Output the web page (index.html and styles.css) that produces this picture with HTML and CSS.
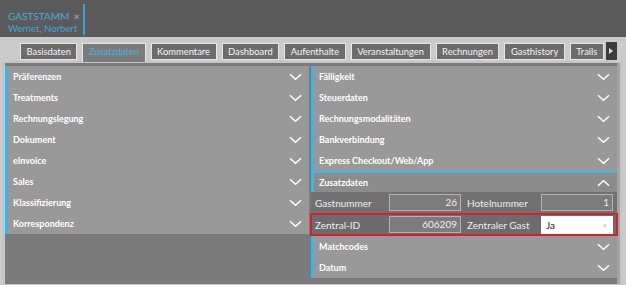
FILE: index.html
```html
<!DOCTYPE html>
<html lang="de">
  <head>
    <meta charset="UTF-8" />
    <title>Gaststamm</title>
    <link rel="stylesheet" href="styles.css">
  </head>
  <body>
    <div class="topbar">
      <div class="doc-tab">
        <div class="doc-title">GASTSTAMM <span class="close">&times;</span></div>
        <div class="doc-sub">Wernet, Norbert</div>
      </div>
    </div>

    <div class="tabs">
      <div class="tab">Basisdaten</div>
      <div class="tab active">Zusatzdaten</div>
      <div class="tab">Kommentare</div>
      <div class="tab">Dashboard</div>
      <div class="tab">Aufenthalte</div>
      <div class="tab">Veranstaltungen</div>
      <div class="tab">Rechnungen</div>
      <div class="tab">Gasthistory</div>
      <div class="tab">Trails</div>
      <div class="tab-more">
        <svg width="4" height="6" viewBox="0 0 4 6"><polygon points="0,0 4,3 0,6" fill="#ddd" /></svg>
      </div>
    </div>

    <div class="content">
      <div class="panel left">
        <div class="item"><span>Präferenzen</span><svg class="chev" viewBox="0 0 14 8"><polyline points="1,1 7,6.5 13,1" /></svg></div>
        <div class="item"><span>Treatments</span><svg class="chev" viewBox="0 0 14 8"><polyline points="1,1 7,6.5 13,1" /></svg></div>
        <div class="item"><span>Rechnungslegung</span><svg class="chev" viewBox="0 0 14 8"><polyline points="1,1 7,6.5 13,1" /></svg></div>
        <div class="item"><span>Dokument</span><svg class="chev" viewBox="0 0 14 8"><polyline points="1,1 7,6.5 13,1" /></svg></div>
        <div class="item"><span>eInvoice</span><svg class="chev" viewBox="0 0 14 8"><polyline points="1,1 7,6.5 13,1" /></svg></div>
        <div class="item"><span>Sales</span><svg class="chev" viewBox="0 0 14 8"><polyline points="1,1 7,6.5 13,1" /></svg></div>
        <div class="item"><span>Klassifizierung</span><svg class="chev" viewBox="0 0 14 8"><polyline points="1,1 7,6.5 13,1" /></svg></div>
        <div class="item"><span>Korrespondenz</span><svg class="chev" viewBox="0 0 14 8"><polyline points="1,1 7,6.5 13,1" /></svg></div>
      </div>

      <div class="panel right">
        <div class="item"><span>Fälligkeit</span><svg class="chev" viewBox="0 0 14 8"><polyline points="1,1 7,6.5 13,1" /></svg></div>
        <div class="item"><span>Steuerdaten</span><svg class="chev" viewBox="0 0 14 8"><polyline points="1,1 7,6.5 13,1" /></svg></div>
        <div class="item"><span>Rechnungsmodalitäten</span><svg class="chev" viewBox="0 0 14 8"><polyline points="1,1 7,6.5 13,1" /></svg></div>
        <div class="item"><span>Bankverbindung</span><svg class="chev" viewBox="0 0 14 8"><polyline points="1,1 7,6.5 13,1" /></svg></div>
        <div class="item"><span>Express Checkout/Web/App</span><svg class="chev" viewBox="0 0 14 8"><polyline points="1,1 7,6.5 13,1" /></svg></div>
        <div class="item open"><span>Zusatzdaten</span><svg class="chev" viewBox="0 0 14 8"><polyline points="1,7 7,1.5 13,7" /></svg></div>

        <div class="row">
          <span class="lbl">Gastnummer</span>
          <span class="field">26</span>
          <span class="lbl">Hotelnummer</span>
          <span class="field">1</span>
        </div>
        <div class="row marked">
          <span class="lbl">Zentral-ID</span>
          <span class="field">606209</span>
          <span class="lbl">Zentraler Gast</span>
          <span class="select">Ja <span class="arrow">&#9662;</span></span>
        </div>

        <div class="item"><span>Matchcodes</span><svg class="chev" viewBox="0 0 14 8"><polyline points="1,1 7,6.5 13,1" /></svg></div>
        <div class="item"><span>Datum</span><svg class="chev" viewBox="0 0 14 8"><polyline points="1,1 7,6.5 13,1" /></svg></div>
      </div>
    </div>
  </body>
</html>
```

FILE: styles.css
```css
body {
  margin: 0;
  background-color: #cbcbcb;
  font-family: Lato, "Open Sans", sans-serif;
  font-size: 10px;
  width: 626px;
  height: 285px;
  overflow: hidden;
}
.topbar {
  height: 37px;
  background-color: #5a5a5a;
  display: flex;
}
.doc-tab {
  margin: 4px 0 2px;
  padding: 6px 6px 0 8px;
  width: 69px;
  white-space: nowrap;
  border-right: 2px solid #3b9fd2;
}
.doc-title {
  color: #4aa9d9;
  font-size: 10px;
  line-height: 12px;
}
.close {
  color: #b5b5b5;
  margin-left: 2px;
}
.doc-sub {
  color: #45a3d6;
  font-size: 9.5px;
  line-height: 13px;
}
.tabs {
  display: flex;
  gap: 5px;
  height: 24px;
  padding-left: 20px;
  box-sizing: border-box;
  padding-top: 6px;
  align-items: flex-start;
  white-space: nowrap;
}
.tab {
  height: 17px;
  line-height: 15px;
  padding: 0 5.5px;
  box-sizing: border-box;
  background-color: #6c6c6c;
  border: 1px solid #e6e6e6;
  color: #f4f4f4;
  font-size: 9.4px;
}
.tab.active {
  background-color: #7b7b7b;
  color: #49b1e2;
  height: 19px;
  border-bottom: none;
}
.tab-more {
  width: 11px;
  height: 18px;
  margin-left: -3px;
  margin-top: -1px;
  background-color: #3c3c3c;
  display: flex;
  align-items: center;
  justify-content: center;
}
.content {
  margin: 0 3px 0 2px;
  height: 221px;
  border: 3px solid #c6c6c6;
  border-top-width: 2px;
  background-color: #7b7b7b;
  display: flex;
  gap: 2px;
}
.panel {
  display: flex;
  flex-direction: column;
  padding-top: 3px;
}
.left {
  width: 305px;
}
.right {
  width: 306px;
  border-right: 3px solid #a4a4a4;
}
.item {
  height: 21px;
  flex-shrink: 0;
  background-color: #999999;
  border-left: 3px solid #3bb7e9;
  display: flex;
  align-items: center;
  justify-content: space-between;
  padding: 0 7px 0 5px;
  color: #ffffff;
  font-weight: bold;
  font-size: 9px;
}
.item.open {
  background-color: #8c8c8c;
  border-top: 2px solid #3bb7e9;
  height: 21px;
  box-sizing: border-box;
}
.chev {
  width: 13px;
  height: 8px;
  fill: none;
  stroke: #ffffff;
  stroke-width: 1.6;
}
.row {
  height: 21px;
  flex-shrink: 0;
  display: flex;
  align-items: center;
  background-color: #717171;
  color: #eeeeee;
  font-size: 10px;
  padding-left: 4px;
}
.row.marked {
  background-color: #6c6c6c;
  outline: 2px solid #d3222c;
  outline-offset: -1px;
  margin: 1px 0;
  height: 21px;
}
.lbl {
  width: 74px;
  flex-shrink: 0;
}
.field {
  width: 72px;
  height: 17px;
  box-sizing: border-box;
  border: 1px solid #b3b3b3;
  background-color: #7c7c7c;
  text-align: right;
  padding-right: 3px;
  line-height: 15px;
  margin-right: 6px;
  flex-shrink: 0;
}
.select {
  width: 72px;
  height: 18px;
  box-sizing: border-box;
  background-color: #ffffff;
  color: #222222;
  line-height: 18px;
  padding-left: 5px;
  display: flex;
  justify-content: space-between;
}
.arrow {
  color: #cfcfcf;
  font-size: 7px;
  padding-right: 6px;
}
```
